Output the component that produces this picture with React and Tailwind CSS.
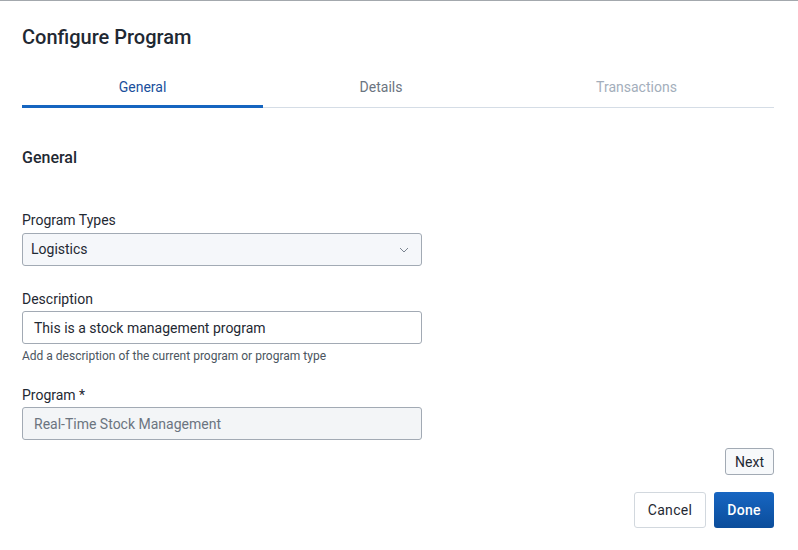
export default function App() {
    const tabs = [
        { label: "General", state: "active", w: "w-[241px]" },
        { label: "Details", state: "idle", w: "w-[236px]" },
        { label: "Transactions", state: "disabled", w: "flex-1" },
    ];

    return (
        <div
            className="w-[798px] h-[550px] bg-white border-t border-[#a3a8ad] text-[#1f2933] overflow-hidden"
            style={{ fontFamily: "Roboto, 'Liberation Sans', sans-serif" }}
        >
            <div className="pl-[22px] pr-[24px] pt-[22px]">
                <h1 className="text-[20px] leading-[28px] font-medium text-[#1f2933]">
                    Configure Program
                </h1>

                <div className="mt-[15px] flex border-b border-[#d5dde6]">
                    {tabs.map((t) =>
                        t.state === "active" ? (
                            <div
                                key={t.label}
                                className={`${t.w} text-center text-[14px] leading-[20px] pt-[11px] pb-[8px] border-b-[3px] border-[#1565c0] -mb-px text-[#1a4f9c]`}
                            >
                                {t.label}
                            </div>
                        ) : (
                            <div
                                key={t.label}
                                className={`${t.w} text-center text-[14px] leading-[20px] pt-[11px] pb-[10px] ${
                                    t.state === "idle" ? "text-[#6b7480]" : "text-[#a3aebb]"
                                }`}
                            >
                                {t.label}
                            </div>
                        )
                    )}
                </div>

                <h2 className="mt-[38px] text-[16px] leading-[24px] font-medium">General</h2>

                <div className="mt-[40px] w-[400px]">
                    <label className="block text-[14px] leading-[20px]">Program Types</label>
                    <div className="mt-[3px] h-[33px] rounded-[3px] border border-[#a2aab4] bg-[#f5f7fa] flex items-center justify-between pl-[8px] pr-[12px]">
                        <span className="text-[14px]">Logistics</span>
                        <svg width="10" height="6" viewBox="0 0 10 6" fill="none">
                            <path d="M1 1l4 4 4-4" stroke="#7b8490" strokeWidth="1" />
                        </svg>
                    </div>

                    <label className="mt-[23px] block text-[14px] leading-[20px]">Description</label>
                    <div className="mt-[2px] h-[33px] rounded-[3px] border border-[#a2aab4] bg-white flex items-center pl-[11px] pt-px">
                        <span className="text-[14px]">This is a stock management program</span>
                    </div>
                    <p className="mt-[4px] text-[12px] leading-[16px] text-[#4b5560]">
                        Add a description of the current program or program type
                    </p>

                    <label className="mt-[21px] block text-[14px] leading-[20px]">Program *</label>
                    <div className="mt-[2px] h-[33px] rounded-[3px] border border-[#a2aab4] bg-[#f3f5f7] flex items-center pl-[11px] pt-px">
                        <span className="text-[14px] text-[#6b7480]">Real-Time Stock Management</span>
                    </div>
                </div>

                <div className="mt-[8px] flex justify-end">
                    <button className="h-[27px] w-[49px] rounded-[3px] border border-[#a2aab4] bg-[#f7f9fb] text-[14px] leading-[20px] pt-px text-[#1f2933]">
                        Next
                    </button>
                </div>

                <div className="mt-[17px] flex justify-end gap-[8px]">
                    <button className="h-[36px] w-[72px] rounded-[3px] border border-[#d2d8de] bg-white text-[14px] text-[#1f2933] tracking-[0.3px]">
                        Cancel
                    </button>
                    <button className="h-[36px] w-[60px] rounded-[3px] bg-gradient-to-b from-[#1766c2] to-[#0b4d9b] text-[14px] font-medium text-white tracking-[0.3px]">
                        Done
                    </button>
                </div>
            </div>
        </div>
    );
}
